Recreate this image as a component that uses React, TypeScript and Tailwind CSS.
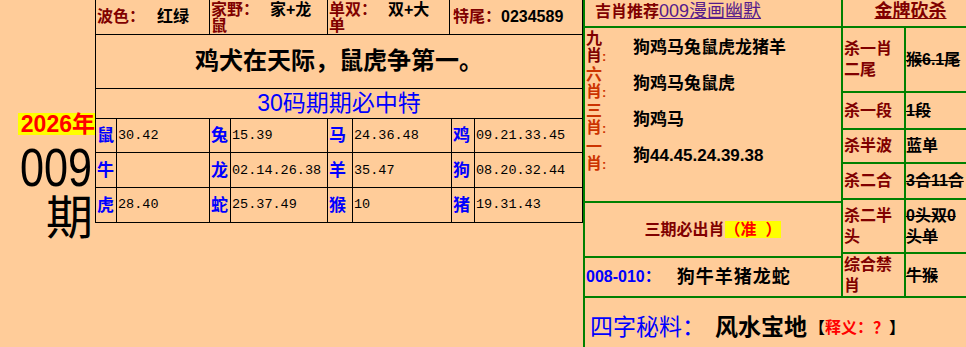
import React from "react";

const zodiac = [
    [
        ["鼠", "30.42"],
        ["兔", "15.39"],
        ["马", "24.36.48"],
        ["鸡", "09.21.33.45"],
    ],
    [
        ["牛", ""],
        ["龙", "02.14.26.38"],
        ["羊", "35.47"],
        ["狗", "08.20.32.44"],
    ],
    [
        ["虎", "28.40"],
        ["蛇", "25.37.49"],
        ["猴", "10"],
        ["猪", "19.31.43"],
    ],
];

// label / value widths incl. right border
const colW = [
    ["w-[21px]", "w-[93px]"],
    ["w-[21px]", "w-[97px]"],
    ["w-[25px]", "w-[99px]"],
    ["w-[23px]", "flex-1"],
];

const rowH = ["h-[35px] border-b", "h-[35px] border-b", "h-[34px]"];

const picks = [
    { a: "九", b: "肖", color: "text-[#800000]", value: "狗鸡马兔鼠虎龙猪羊" },
    { a: "六", b: "肖", color: "text-[#cc3300]", value: "狗鸡马兔鼠虎" },
    { a: "三", b: "肖", color: "text-[#cc3300]", value: "狗鸡马" },
    { a: "一", b: "肖", color: "text-[#cc3300]", value: "狗44.45.24.39.38" },
];

const kills = [
    { h: "h-[66px]", label: ["杀一肖", "二尾"], value: ["猴6.1尾"], strike: true },
    { h: "h-[38px]", label: ["杀一段"], value: ["1段"], strike: true },
    { h: "h-[34px]", label: ["杀半波"], value: ["蓝单"], strike: false },
    { h: "h-[37px]", label: ["杀二合"], value: ["3合11合"], strike: true },
    { h: "h-[55px]", label: ["杀二半", "头"], value: ["0头双0", "头单"], strike: true },
    { h: "flex-1", label: ["综合禁", "肖"], value: ["牛猴"], strike: true, last: true },
];

const App = () => {
    return (
        <div className="w-[966px] h-[347px] bg-[#ffcc99] flex overflow-hidden font-['Liberation_Sans','Noto_Sans_CJK_SC',sans-serif] text-black">
            {/* period */}
            <div className="w-[95px] shrink-0 flex flex-col items-end pt-[113px]">
                <span className="bg-[#ffff00] text-[#ff0000] font-bold text-[23px] leading-[22px] pl-[3px]">
                    2026年
                </span>
                <span className="inline-block origin-right scale-x-[0.8] text-[54px] leading-[44px] mt-[10px] mr-[3px]">
                    009
                </span>
                <span className="font-['Noto_Sans_CJK_SC',sans-serif] text-[47px] leading-[50px] mr-[2px]">
                    期
                </span>
            </div>

            {/* main table */}
            <div className="w-[488px] shrink-0">
                <div className="h-[223px] border-l border-r border-b border-black flex flex-col">
                    <div className="h-[35px] border-b border-black flex text-[16px] leading-[16px] font-bold">
                        <div className="w-[114px] border-r border-black flex items-center pl-[1px]">
                            <span className="text-[#800000]">波色：</span>
                            <span className="ml-[12px]">红绿</span>
                        </div>
                        <div className="w-[118px] border-r border-black pl-[1px] pt-[2px]">
                            <span className="text-[#800000]">家野：</span>
                            <span className="ml-[11px]">家+龙</span>
                            <br />
                            <span className="text-[#800000]">鼠</span>
                        </div>
                        <div className="w-[122px] border-r border-black pl-[1px] pt-[2px]">
                            <span className="text-[#800000]">单双：</span>
                            <span className="ml-[11px]">双+大</span>
                            <br />
                            <span className="text-[#800000]">单</span>
                        </div>
                        <div className="flex-1 flex items-center pl-[3px]">
                            <span className="text-[#800000]">特尾：</span>
                            <span>0234589</span>
                        </div>
                    </div>
                    <div className="h-[54px] border-b border-black flex items-center justify-center text-[24px] font-bold leading-none">
                        鸡犬在天际，鼠虎争第一。
                    </div>
                    <div className="h-[30px] border-b border-black flex items-center justify-center text-[23px] text-[#0000ff] leading-none">
                        30码期期必中特
                    </div>
                    {zodiac.map((row, r) => (
                        <div key={r} className={`${rowH[r]} border-black flex`}>
                            {row.map(([animal, nums], c) => (
                                <React.Fragment key={animal}>
                                    <div
                                        className={`${colW[c][0]} border-r border-black flex items-center pl-[1px] text-[17px] font-bold text-[#0000ff] leading-none`}
                                    >
                                        {animal}
                                    </div>
                                    <div
                                        className={`${colW[c][1]} ${c < 3 ? "border-r" : ""} border-black flex items-center pl-[1px] font-['Liberation_Mono',monospace] text-[13.5px] leading-none`}
                                    >
                                        {nums}
                                    </div>
                                </React.Fragment>
                            ))}
                        </div>
                    ))}
                </div>
            </div>

            {/* recommendations */}
            <div className="flex-1 flex flex-col border-l-2 border-[#008000] font-bold">
                <div className="h-[28px] shrink-0 flex border-b-2 border-[#008000]">
                    <div className="w-[258px] border-r-2 border-[#008000] flex items-center pl-[10px] pb-[3px]">
                        <span className="text-[16px] text-[#800000]">吉肖推荐</span>
                        <span className="text-[18px] font-normal text-[#551a8b] underline">009漫画幽默</span>
                    </div>
                    <div className="flex-1 flex items-center justify-center pl-[12px] pb-[3px] text-[18px] text-[#800000] underline">
                        金牌砍杀
                    </div>
                </div>

                <div className="h-[270px] shrink-0 flex border-b-2 border-[#008000]">
                    <div className="w-[258px] border-r-2 border-[#008000] flex flex-col">
                        <div className="h-[175px] border-b-2 border-[#008000] flex flex-col pt-[1px]">
                            {picks.map((p) => (
                                <div key={p.a} className="h-[36px] flex items-center">
                                    <div className={`w-[48px] pl-[1px] text-[16px] leading-[17px] ${p.color}`}>
                                        {p.a}
                                        <br />
                                        {p.b}
                                        <span className="text-[#cc3300] text-[13px]">:</span>
                                    </div>
                                    <span className="text-[17px] leading-none">{p.value}</span>
                                </div>
                            ))}
                        </div>
                        <div className="h-[55px] border-b-2 border-[#008000] flex items-center justify-center text-[16px] leading-[17px]">
                            <span className="text-[#800000]">三期必出肖</span>
                            <span className="bg-[#ffff00] text-[#ff0000]">（准&nbsp;&nbsp;）</span>
                        </div>
                        <div className="flex-1 flex items-center pl-[1px]">
                            <span className="text-[16px] text-[#0000ff]">008-010：</span>
                            <span className="ml-[16px] text-[18px] tracking-[1px]">狗牛羊猪龙蛇</span>
                        </div>
                    </div>
                    <div className="flex-1 flex flex-col">
                        {kills.map((k) => (
                            <div
                                key={k.label[0]}
                                className={`${k.h} ${k.last ? "" : "border-b-2"} border-[#008000] flex`}
                            >
                                <div className="w-[63px] border-r-2 border-[#008000] flex flex-col justify-center pl-[1px] text-[16px] leading-[21px] text-[#800000]">
                                    {k.label.map((l) => (
                                        <span key={l}>{l}</span>
                                    ))}
                                </div>
                                <div
                                    className={`flex-1 flex flex-col justify-center text-[16px] leading-[21px] whitespace-nowrap ${k.strike ? "line-through" : ""}`}
                                >
                                    {k.value.map((v) => (
                                        <span key={v}>{v}</span>
                                    ))}
                                </div>
                            </div>
                        ))}
                    </div>
                </div>

                <div className="flex-1 flex items-center pl-[5px] pt-[10px]">
                    <span className="text-[23px] font-normal text-[#0000ff]">四字秘料：</span>
                    <span className="ml-[10px] text-[23px]">风水宝地</span>
                    <span className="ml-[2px] text-[16px]">
                        【<span className="text-[#ff0000]">释义：？</span>】
                    </span>
                </div>
            </div>
        </div>
    );
};

export default App;
